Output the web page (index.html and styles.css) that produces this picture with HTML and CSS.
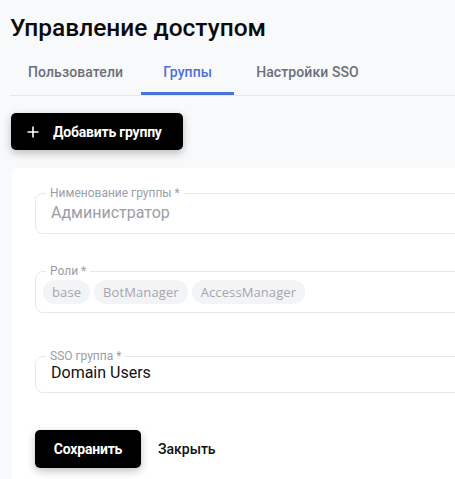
FILE: index.html
```html
<!DOCTYPE html>
<html lang="ru">
<head>
<meta charset="utf-8">
<link rel="stylesheet" href="styles.css">
</head>
<body>
<div class="page">
  <h1 class="title">Управление доступом</h1>
  <nav class="tabs">
    <div class="tab tab-first">Пользователи</div>
    <div class="tab tab-active">Группы</div>
    <div class="tab">Настройки SSO</div>
  </nav>
  <button class="btn btn-add">
    <svg class="plus" width="12" height="12" viewBox="0 0 12 12"><path d="M6 0.5V11.5M0.5 6H11.5" stroke="#fff" stroke-width="1.6" fill="none"/></svg>
    <span>Добавить группу</span>
  </button>
  <section class="card">
    <fieldset class="field">
      <legend>Нименование группы *</legend>
      <div class="value muted">Администратор</div>
    </fieldset>
    <fieldset class="field field-chips">
      <legend>Роли *</legend>
      <div class="chips">
        <span class="chip">base</span>
        <span class="chip">BotManager</span>
        <span class="chip">AccessManager</span>
      </div>
    </fieldset>
    <fieldset class="field field-sso">
      <legend>SSO группа *</legend>
      <div class="value">Domain Users</div>
    </fieldset>
    <div class="actions">
      <button class="btn btn-save">Сохранить</button>
      <button class="btn-link">Закрыть</button>
    </div>
  </section>
</div>
</body>
</html>
```
FILE: styles.css
```css
html, body {
  margin: 0;
  padding: 0;
}
body {
  background: #f8f9fb;
  font-family: Roboto, "Noto Sans", Arial, sans-serif;
  color: #111;
  overflow: hidden;
  width: 455px;
  height: 479px;
}
.page {
  padding: 12px 0 0 10px;
  width: 700px;
}
.title {
  margin: 0;
  font-size: 24.5px;
  line-height: 32px;
  font-weight: 500;
  color: #0b0b0b;
  letter-spacing: 0;
}
.tabs {
  display: flex;
  margin-top: 7px;
  border-bottom: 1px solid #e6e8ec;
  height: 45px;
  box-sizing: border-box;
}
.tab {
  padding: 0 22px;
  font-size: 14px;
  font-weight: 500;
  color: #6b6f78;
  display: flex;
  align-items: center;
  height: 44px;
  box-sizing: border-box;
  border-bottom: 3px solid transparent;
  letter-spacing: 0.1px;
}
.tab-first {
  padding-left: 18px;
  padding-right: 18px;
}
.tab-active {
  color: #4e6fd9;
  border-bottom-color: #4a72dc;
}
.btn {
  border: none;
  background: #000;
  color: #fff;
  border-radius: 5px;
  font-family: inherit;
  font-weight: 700;
  font-size: 14px;
  box-shadow: 0 3px 8px rgba(0,0,0,0.25);
  cursor: pointer;
}
.btn-add {
  margin-top: 17px;
  margin-left: 1px;
  display: flex;
  align-items: center;
  height: 37px;
  width: 172px;
  padding: 0 0 0 16px;
  gap: 14px;
  letter-spacing: -0.2px;
}
.plus {
  flex: none;
}
.card {
  margin-top: 18px;
  margin-left: 2px;
  background: #fff;
  border-radius: 5px;
  padding: 18px 0 40px 23px;
  width: 650px;
}
.field {
  margin: 0;
  border: 1px solid #e6e8ec;
  border-radius: 8px;
  padding: 0 15px;
  min-width: 0;
}
.field legend {
  margin-left: -5px;
  padding: 0 4px;
  font-size: 12px;
  line-height: 14px;
  color: #9a9ea6;
}
.value {
  font-size: 16px;
  line-height: 22px;
  padding: 2px 0 9px;
  color: #121212;
}
.value.muted {
  color: #9a9ea6;
}
.field-chips {
  margin-top: 30px;
}
.chips {
  display: flex;
  gap: 4px;
  padding: 2px 0 8px;
  margin-left: -8px;
}
.chip {
  background: #f3f4f6;
  color: #a3a7ae;
  border-radius: 12px;
  height: 24px;
  line-height: 24px;
  padding: 0 9px;
  font-family: "Open Sans", "Noto Sans", sans-serif;
  font-size: 13px;
  letter-spacing: 0.1px;
}
.field-sso {
  margin-top: 36px;
}
.field-sso .value {
  line-height: 20px;
  padding: 0 0 9px;
}
.actions {
  margin-top: 37px;
  display: flex;
  align-items: center;
  gap: 17px;
}
.btn-save {
  height: 38px;
  width: 106px;
  padding: 0;
  letter-spacing: -0.2px;
}
.btn-link {
  border: none;
  background: none;
  padding: 0;
  font-family: inherit;
  font-size: 14px;
  font-weight: 500;
  color: #111;
}
```
